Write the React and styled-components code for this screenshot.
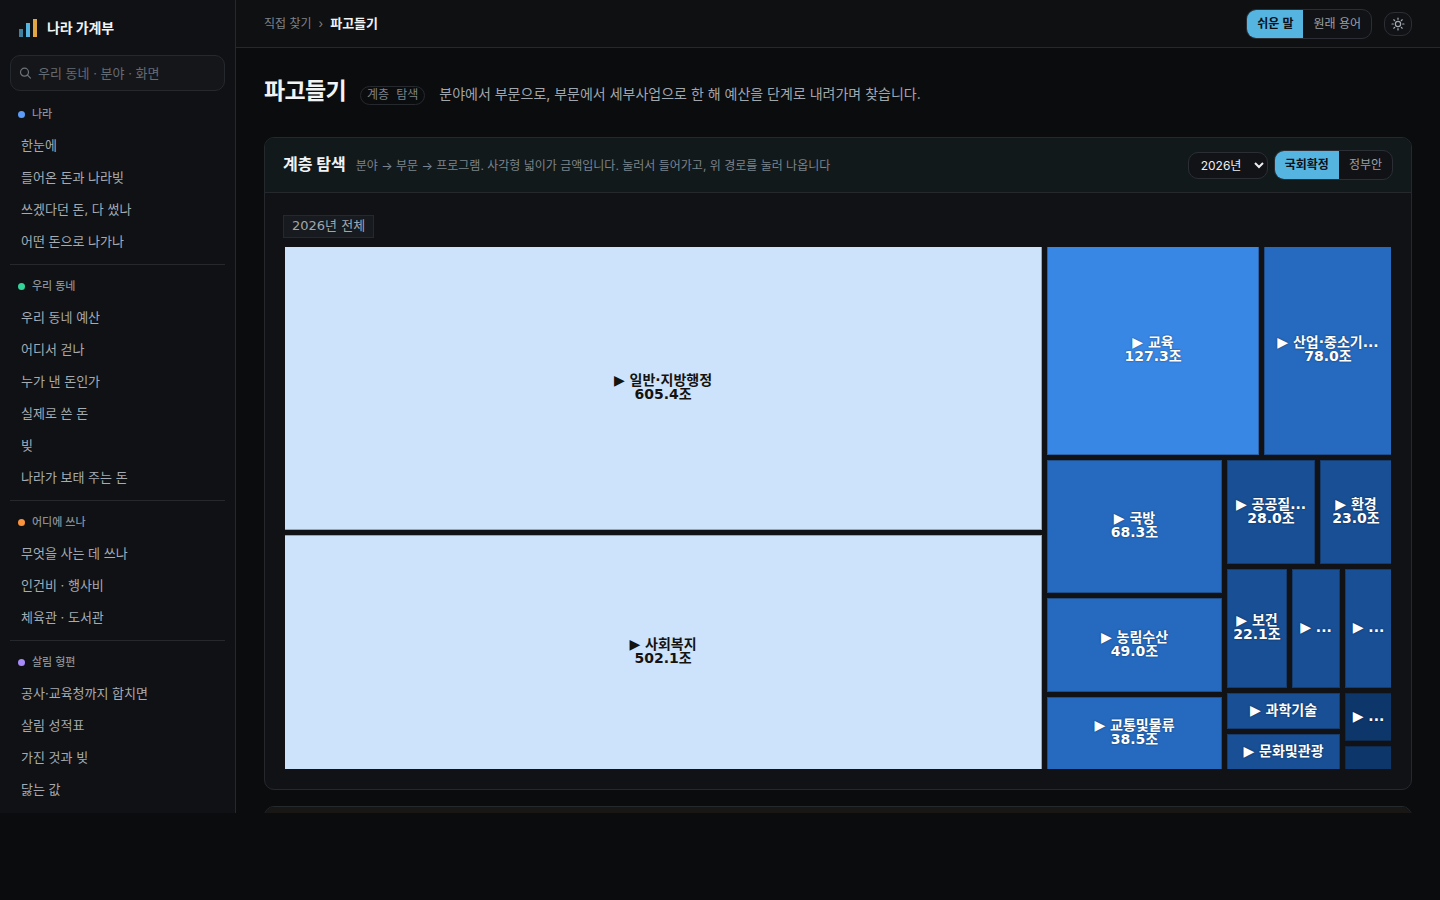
import React, { useState } from "react";
import styled, { createGlobalStyle, css } from "styled-components";

const GlobalStyle = createGlobalStyle`
  *, *::before, *::after { box-sizing: border-box; }
  html { background: #0a0c0e; color-scheme: dark; }
  body {
    margin: 0;
    background: #0a0c0e;
    color: #eceef1;
    font-family: Inter, "Noto Sans CJK KR", sans-serif;
    font-size: 13px;
    line-height: 20px;
  }
  button, input, select { font: inherit; color: inherit; }
  button { cursor: pointer; }
  h1, h2, p, ul { margin: 0; padding: 0; }
  ul { list-style: none; }
`;

const Shell = styled.div`
  display: grid;
  grid-template-columns: 236px minmax(0, 1fr);
  height: calc(100vh - 87px);
  overflow: hidden;
`;

const Sidebar = styled.aside`
  display: flex;
  flex-direction: column;
  padding: 0 10px;
  overflow: hidden;
  background: #0f1114;
  border-right: 1px solid #25282d;
`;

const Brand = styled.a`
  display: flex;
  flex: none;
  align-items: center;
  gap: 9px;
  height: 55px;
  padding-left: 8px;
  color: #f1f3f5;
  font-size: 14px;
  font-weight: 700;
  letter-spacing: -0.01em;
  text-decoration: none;
`;

const SearchBox = styled.label`
  display: flex;
  flex: none;
  align-items: center;
  gap: 6px;
  height: 36px;
  padding: 0 8px;
  border: 1px solid #25292e;
  border-radius: 10px;
  background: #14161a;
  color: #6c737b;
`;

const SearchInput = styled.input`
  flex: 1;
  min-width: 0;
  padding: 0;
  border: 0;
  outline: 0;
  background: none;
  font-size: 13px;
  &::placeholder { color: #646b73; opacity: 1; }
`;

const Nav = styled.nav`
  padding-top: 2px;
`;

const NavGroup = styled.section`
  flex: none;
  padding-top: 6px;
  & + & {
    border-top: 1px solid #25282d;
  }
`;

const GroupTitle = styled.h2`
  display: flex;
  align-items: center;
  gap: 7px;
  height: 30px;
  padding-left: 8px;
  color: #8a9098;
  font-size: 11px;
  font-weight: 500;
`;

const Dot = styled.i`
  width: 7px;
  height: 7px;
  border-radius: 50%;
  background: ${(p) => p.$color};
`;

const NavList = styled.ul`
  padding-bottom: 7px;
`;

const NavLink = styled.a`
  display: block;
  padding: 6px 11px;
  color: #a5abb3;
  font-size: 13px;
  line-height: 20px;
  text-decoration: none;
`;

const Main = styled.div`
  min-width: 0;
  overflow: hidden;
`;

const TopBar = styled.header`
  display: flex;
  align-items: center;
  justify-content: space-between;
  height: 48px;
  padding: 0 28px;
  background: #0e1012;
  border-bottom: 1px solid #25282d;
`;

const Crumbs = styled.nav`
  display: flex;
  align-items: baseline;
  gap: 7px;
  color: #7d838b;
  font-size: 12px;
`;

const CrumbLink = styled.a`
  color: inherit;
  text-decoration: none;
`;

const CrumbHere = styled.span`
  color: #f1f3f5;
  font-size: 13px;
  font-weight: 600;
`;

const Tools = styled.div`
  display: flex;
  align-items: center;
  gap: ${(p) => p.$gap};
`;

const Segment = styled.div`
  display: flex;
  overflow: hidden;
  border: 1px solid #2b2f35;
  border-radius: 10px;
  background: #101216;
`;

const SegmentButton = styled.button`
  padding: 4px 10px;
  border: 0;
  background: ${(p) => (p.$active ? "#56b4e0" : "transparent")};
  color: ${(p) => (p.$active ? "#0b1116" : "#9aa0a8")};
  font-size: 12px;
  font-weight: ${(p) => (p.$active ? 600 : 400)};
  line-height: 20px;
`;

const ThemeButton = styled.button`
  display: flex;
  align-items: center;
  justify-content: center;
  width: 28px;
  height: 24px;
  padding: 0;
  border: 1px solid #2b2f35;
  border-radius: 10px;
  background: #101216;
  color: #a5abb3;
`;

const Content = styled.main`
  display: flex;
  flex-direction: column;
  gap: 16px;
  padding: 26px 28px;
`;

const PageHead = styled.div`
  display: flex;
  align-items: baseline;
  gap: 14px;
  padding-bottom: 13px;
`;

const PageTitle = styled.h1`
  color: #f1f3f5;
  font-size: 23px;
  font-weight: 700;
  line-height: 34px;
  letter-spacing: -0.03em;
`;

const Tag = styled.span`
  padding: 0 6px;
  border: 1px solid #25292e;
  border-radius: 10px;
  color: #7d838b;
  font-family: "DejaVu Sans Mono", "Noto Sans CJK KR", monospace;
  font-size: 12px;
  line-height: 17px;
`;

const Lead = styled.p`
  color: #a0a6ae;
  font-size: 14px;
`;

const Card = styled.section`
  overflow: hidden;
  border: 1px solid #25292e;
  border-radius: 10px;
  background: #111215;
`;

const CardHead = styled.header`
  display: flex;
  align-items: center;
  justify-content: space-between;
  height: 55px;
  padding: 0 18px;
  border-bottom: 1px solid #25292e;
  background: ${(p) => p.$tint};
`;

const CardHeading = styled.div`
  display: flex;
  align-items: baseline;
  gap: 10px;
`;

const CardTitle = styled.h2`
  color: #f1f3f5;
  font-size: 16px;
  font-weight: 700;
`;

const CardNote = styled.p`
  color: #7d838b;
  font-size: 12px;
`;

const YearSelect = styled.select`
  width: 80px;
  height: 27px;
  padding: 0 0 0 8px;
  border: 1px solid #2b2f35;
  border-radius: 10px;
  background: #111317;
  color: #eceef1;
  font-size: 12px;
`;

const CardBody = styled.div`
  padding: 22px 18px 20px;
`;

const PathButton = styled.button`
  display: block;
  height: 23px;
  padding: 0 8px 2px;
  border: 1px solid #25292e;
  background: #171a1e;
  color: #a0a6ae;
  font-family: "DejaVu Sans", "Noto Sans CJK KR", sans-serif;
  font-size: 13px;
  line-height: 20px;
`;

const MapFrame = styled.div`
  display: flex;
  height: 522px;
  margin: 9px 2px 0;
  overflow: hidden;
  /* the outermost tile edges are clipped, so only inner edges show a hairline */
  & > * { margin: -1px; }
`;

const split = css`
  display: flex;
  flex: ${(p) => p.$size} 1 0;
  gap: 5px;
  min-width: 0;
  min-height: 0;
`;

const Columns = styled.div`
  ${split}
`;

const Stack = styled.div`
  ${split}
  flex-direction: column;
`;

const tones = {
  pale: "#cde2fb",
  bright: "#3987e5",
  mid: "#256abf",
  deep: "#184f95",
  dark: "#0d366b",
};

const TileButton = styled.button`
  display: flex;
  flex: ${(p) => p.$size} 1 0;
  align-items: center;
  justify-content: center;
  min-width: 0;
  min-height: 0;
  padding: 0;
  overflow: hidden;
  border: 0;
  background: ${(p) => tones[p.$tone]};
  box-shadow: inset 0 0 0 1px rgba(17, 18, 21, 0.3);
  color: ${(p) => (p.$tone === "pale" ? "#14130f" : "#ffffff")};
  font-family: "DejaVu Sans", "Noto Sans CJK KR", sans-serif;
  font-size: 14px;
  font-weight: 700;
  line-height: 14px;
  white-space: nowrap;
  text-shadow: ${(p) => (p.$tone === "pale" ? "none" : "0 0 2px rgba(0, 0, 0, 0.55)")};
`;

const TileLabel = styled.span`
  display: flex;
  flex-direction: column;
  align-items: center;
  padding-bottom: 3px;
`;

const groups = [
  { title: "나라", color: "#5b9cf8", items: ["한눈에", "들어온 돈과 나라빚", "쓰겠다던 돈, 다 썼나", "어떤 돈으로 나가나"] },
  { title: "우리 동네", color: "#34d399", items: ["우리 동네 예산", "어디서 걷나", "누가 낸 돈인가", "실제로 쓴 돈", "빚", "나라가 보태 주는 돈"] },
  { title: "어디에 쓰나", color: "#fb923c", items: ["무엇을 사는 데 쓰나", "인건비 · 행사비", "체육관 · 도서관"] },
  { title: "살림 형편", color: "#a78bfa", items: ["공사·교육청까지 합치면", "살림 성적표", "가진 것과 빚", "닳는 값"] },
];

function Logo() {
  return (
    <svg width="20" height="20" viewBox="0 0 20 20" aria-hidden="true">
      <rect x="1" y="11" width="4" height="8" fill="#427f9e" />
      <rect x="8" y="5" width="4" height="14" fill="#56b4e0" />
      <rect x="15" y="1" width="4" height="18" fill="#dfa643" />
    </svg>
  );
}

function SearchIcon() {
  return (
    <svg width="13" height="13" viewBox="0 0 13 13" fill="none" stroke="currentColor" strokeWidth="1.2" strokeLinecap="round" aria-hidden="true">
      <circle cx="5.5" cy="5.2" r="4" />
      <path d="M8.5 8.2 11.5 11.2" />
    </svg>
  );
}

function SunIcon() {
  return (
    <svg width="14" height="14" viewBox="0 0 16 16" fill="none" stroke="currentColor" strokeWidth="1.4" strokeLinecap="round" aria-hidden="true">
      <circle cx="8" cy="8" r="3" />
      <path d="M8 1.2v1.4M8 13.4v1.4M1.2 8h1.4M13.4 8h1.4M3.2 3.2l1 1M11.8 11.8l1 1M3.2 12.8l1-1M11.8 4.2l1-1" />
    </svg>
  );
}

function Toggle({ label, options }) {
  const [active, setActive] = useState(0);
  return (
    <Segment role="group" aria-label={label}>
      {options.map((option, i) => (
        <SegmentButton key={option} type="button" $active={i === active} aria-pressed={i === active} onClick={() => setActive(i)}>
          {option}
        </SegmentButton>
      ))}
    </Segment>
  );
}

function Tile({ size, tone, name, amount }) {
  return (
    <TileButton type="button" $size={size} $tone={tone}>
      <TileLabel>
        {name && <span>▶ {name}</span>}
        {amount && <span>{amount}</span>}
      </TileLabel>
    </TileButton>
  );
}

function BudgetMap() {
  return (
    <MapFrame>
      <Columns $size={1}>
        <Stack $size={758}>
          <Tile size={284} tone="pale" name="일반·지방행정" amount="605.4조" />
          <Tile size={235} tone="pale" name="사회복지" amount="502.1조" />
        </Stack>
        <Stack $size={345}>
          <Columns $size={209}>
            <Tile size={212} tone="bright" name="교육" amount="127.3조" />
            <Tile size={128} tone="mid" name="산업·중소기..." amount="78.0조" />
          </Columns>
          <Columns $size={310}>
            <Stack $size={175}>
              <Tile size={133} tone="mid" name="국방" amount="68.3조" />
              <Tile size={94} tone="mid" name="농림수산" amount="49.0조" />
              <Tile size={73} tone="mid" name="교통및물류" amount="38.5조" />
            </Stack>
            <Stack $size={165}>
              <Columns $size={104}>
                <Tile size={88} tone="deep" name="공공질..." amount="28.0조" />
                <Tile size={72} tone="deep" name="환경" amount="23.0조" />
              </Columns>
              <Columns $size={201}>
                <Stack $size={113}>
                  <Columns $size={119}>
                    <Tile size={60} tone="deep" name="보건" amount="22.1조" />
                    <Tile size={48} tone="deep" name="..." />
                  </Columns>
                  <Tile size={36} tone="deep" name="과학기술" />
                  <Tile size={36} tone="deep" name="문화및관광" />
                </Stack>
                <Stack $size={47}>
                  <Tile size={119} tone="deep" name="..." />
                  <Tile size={48} tone="dark" name="..." />
                  <Tile size={24} tone="dark" />
                </Stack>
              </Columns>
            </Stack>
          </Columns>
        </Stack>
      </Columns>
    </MapFrame>
  );
}

export default function App() {
  return (
    <>
      <GlobalStyle />
      <Shell>
        <Sidebar>
          <Brand href="#">
            <Logo />
            나라 가계부
          </Brand>
          <SearchBox>
            <SearchIcon />
            <SearchInput type="text" placeholder="우리 동네 · 분야 · 화면" aria-label="검색" />
          </SearchBox>
          <Nav>
            {groups.map((group) => (
              <NavGroup key={group.title}>
                <GroupTitle>
                  <Dot $color={group.color} />
                  {group.title}
                </GroupTitle>
                <NavList>
                  {group.items.map((item) => (
                    <li key={item}>
                      <NavLink href="#">{item}</NavLink>
                    </li>
                  ))}
                </NavList>
              </NavGroup>
            ))}
          </Nav>
        </Sidebar>
        <Main>
          <TopBar>
            <Crumbs>
              <CrumbLink href="#">직접 찾기</CrumbLink>
              <span>›</span>
              <CrumbHere>파고들기</CrumbHere>
            </Crumbs>
            <Tools $gap="12px">
              <Toggle label="용어" options={["쉬운 말", "원래 용어"]} />
              <ThemeButton type="button" aria-label="밝은 화면">
                <SunIcon />
              </ThemeButton>
            </Tools>
          </TopBar>
          <Content>
            <PageHead>
              <PageTitle>파고들기</PageTitle>
              <Tag>계층 탐색</Tag>
              <Lead>분야에서 부문으로, 부문에서 세부사업으로 한 해 예산을 단계로 내려가며 찾습니다.</Lead>
            </PageHead>
            <Card>
              <CardHead $tint="#11191b">
                <CardHeading>
                  <CardTitle>계층 탐색</CardTitle>
                  <CardNote>분야 → 부문 → 프로그램. 사각형 넓이가 금액입니다. 눌러서 들어가고, 위 경로를 눌러 나옵니다</CardNote>
                </CardHeading>
                <Tools $gap="6px">
                  <YearSelect aria-label="연도" defaultValue="2026">
                    <option value="2026">2026년</option>
                  </YearSelect>
                  <Toggle label="예산 단계" options={["국회확정", "정부안"]} />
                </Tools>
              </CardHead>
              <CardBody>
                <PathButton type="button">2026년 전체</PathButton>
                <BudgetMap />
              </CardBody>
            </Card>
            <Card>
              <CardHead $tint="#191716" />
            </Card>
          </Content>
        </Main>
      </Shell>
    </>
  );
}
